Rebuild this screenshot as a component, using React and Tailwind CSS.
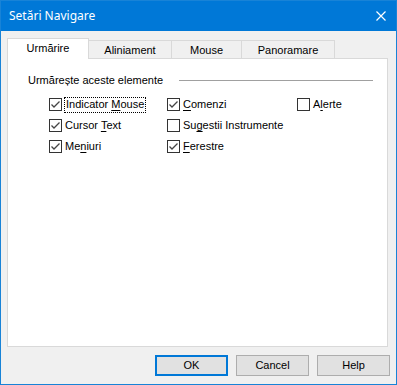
import React from "react";

const Box = ({ checked }) => (
  <svg width="13" height="13" viewBox="0 0 13 13" className="shrink-0 block">
    <rect x="0.5" y="0.5" width="12" height="12" fill="white" stroke="#333333" />
    {checked && (
      <path d="M2.5 6.5 L5 9 L10.5 3.5" fill="none" stroke="#444444" strokeWidth="1.3" />
    )}
  </svg>
);

const Label = ({ pre, key_, post }) => (
  <span>
    {pre}
    <span className="underline underline-offset-2">{key_}</span>
    {post}
  </span>
);

const Item = ({ checked, pre, k, post, focus }) => (
  <div className="flex items-center h-[21px]">
    <Box checked={checked} />
    {focus ? (
      <span className="ml-[2px] px-[1px] h-[16px] flex items-center border border-dotted border-black leading-none">
        <Label pre={pre} key_={k} post={post} />
      </span>
    ) : (
      <span className="ml-[3px] leading-none">
        <Label pre={pre} key_={k} post={post} />
      </span>
    )}
  </div>
);

const Btn = ({ children, primary }) => (
  <button
    className={
      "w-[73px] h-[21px] bg-[#e1e1e1] flex items-center justify-center text-black " +
      (primary ? "border-2 border-[#0078d7]" : "border border-[#adadad]")
    }
  >
    {children}
  </button>
);

export default function App() {
  return (
    <div
      className="w-[397px] h-[385px] border border-[#1883d7] bg-[#f0f0f0] flex flex-col text-[11px] text-black"
      style={{ fontFamily: '"Liberation Sans", Arial, sans-serif' }}
    >
      <div className="h-[30px] bg-[#0078d7] flex items-center justify-between pl-[8px] pr-[10px] shrink-0">
        <span
          className="text-white text-[12px]"
          style={{ fontFamily: '"Noto Sans", "Open Sans", sans-serif' }}
        >
          Setări Navigare
        </span>
        <svg width="10" height="10" viewBox="0 0 10 10">
          <path d="M0.5 0.5 L9.5 9.5 M9.5 0.5 L0.5 9.5" stroke="white" strokeWidth="1.2" />
        </svg>
      </div>
      <div className="flex flex-col px-[6px] pt-[7px]">
        <div className="flex items-end h-[20px]">
          <div className="relative z-10 w-[82px] h-[21px] -mb-px bg-white border-l border-t border-r border-[#d9d9d9] flex items-center justify-center pb-[2px]">
            Urmărire
          </div>
          <div className="w-[83px] h-[18px] border-t border-r border-[#d9d9d9] flex items-center justify-center pt-[2px]">
            Aliniament
          </div>
          <div className="w-[70px] h-[18px] border-t border-r border-[#d9d9d9] flex items-center justify-center pt-[2px]">
            Mouse
          </div>
          <div className="w-[93px] h-[18px] border-t border-r border-[#d9d9d9] flex items-center justify-center pt-[2px]">
            Panoramare
          </div>
        </div>
        <div className="w-[381px] h-[289px] bg-white border border-[#d9d9d9] flex flex-col">
          <div className="flex items-center h-[14px] mt-[14px] pl-[20px] pr-[14px]">
            <span className="leading-none">Urmărește aceste elemente</span>
            <div className="flex-1 ml-[16px] h-px bg-[#a0a0a0]" />
          </div>
          <div className="grid grid-cols-[118px_130px_auto] pl-[41px] mt-[7px]">
            <div className="flex flex-col">
              <Item checked pre="Indicator " k="M" post="ouse" focus />
              <Item checked pre="Cursor " k="T" post="ext" />
              <Item checked pre="Me" k="n" post="iuri" />
            </div>
            <div className="flex flex-col">
              <Item checked pre="" k="C" post="omenzi" />
              <Item pre="Su" k="g" post="estii Instrumente" />
              <Item checked pre="" k="F" post="erestre" />
            </div>
            <div className="flex flex-col">
              <Item pre="A" k="l" post="erte" />
            </div>
          </div>
        </div>
        <div className="flex justify-end gap-[8px] mt-[8px]">
          <Btn primary>OK</Btn>
          <Btn>Cancel</Btn>
          <Btn>Help</Btn>
        </div>
      </div>
    </div>
  );
}
